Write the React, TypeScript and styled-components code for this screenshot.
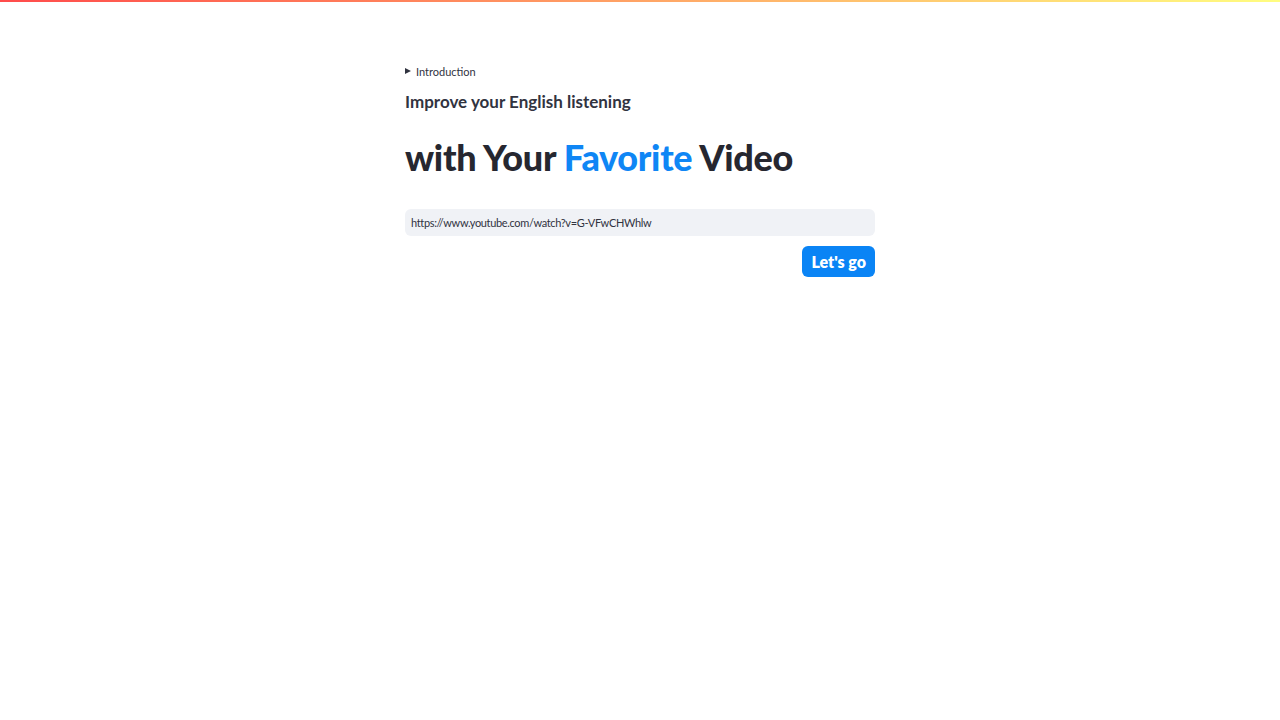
import React from "react";
import styled, { createGlobalStyle } from "styled-components";

const Global = createGlobalStyle`
  html, body { margin: 0; padding: 0; background: #ffffff; }
  body { font-family: "Lato", "Noto Sans", sans-serif; color: #31333f; }
  * { box-sizing: border-box; }
`;

const Decoration = styled.div`
  height: 2px;
  width: 100%;
  background: linear-gradient(90deg, rgb(255, 75, 75), rgb(255, 253, 128));
`;

const Main = styled.main`
  width: 470px;
  margin: 0 auto;
  padding-top: 62px;
  display: flex;
  flex-direction: column;
`;

const Details = styled.div`
  display: flex;
  align-items: center;
  gap: 5px;
  font-size: 11px;
  color: #31333f;
  height: 14px;
`;

const Triangle = styled.span`
  width: 0;
  height: 0;
  border-top: 3.5px solid transparent;
  border-bottom: 3.5px solid transparent;
  border-left: 6px solid #31333f;
`;

const SubTitle = styled.h3`
  margin: 12px 0 0;
  font-size: 17px;
  font-weight: 700;
  line-height: 24px;
  color: #31333f;
`;

const Title = styled.h1`
  margin: 19px 0 0;
  font-size: 36px;
  font-weight: 900;
  line-height: 48px;
  color: #262730;
  letter-spacing: -0.3px;
`;

const Accent = styled.span`
  color: #0f86f5;
`;

const Input = styled.input`
  margin-top: 28px;
  height: 27px;
  width: 100%;
  border: none;
  outline: none;
  background: #f0f2f6;
  border-radius: 6px;
  padding: 0 6px;
  font-family: "Lato", "Noto Sans", sans-serif;
  font-size: 11px;
  letter-spacing: -0.35px;
  color: #31333f;
`;

const Actions = styled.div`
  display: flex;
  justify-content: flex-end;
  margin-top: 10px;
`;

const Button = styled.button`
  height: 31px;
  padding: 0 9px;
  border: none;
  border-radius: 6px;
  background: #0a84f5;
  color: #ffffff;
  font-family: "Lato", "Noto Sans", sans-serif;
  font-weight: 800;
  font-size: 16px;
  cursor: pointer;
`;

export default function App() {
  return (
    <>
      <Global />
      <Decoration />
      <Main>
        <Details>
          <Triangle />
          <span>Introduction</span>
        </Details>
        <SubTitle>Improve your English listening</SubTitle>
        <Title>
          with Your <Accent>Favorite</Accent> Video
        </Title>
        <Input defaultValue="https://www.youtube.com/watch?v=G-VFwCHWhlw" />
        <Actions>
          <Button>Let's go</Button>
        </Actions>
      </Main>
    </>
  );
}
